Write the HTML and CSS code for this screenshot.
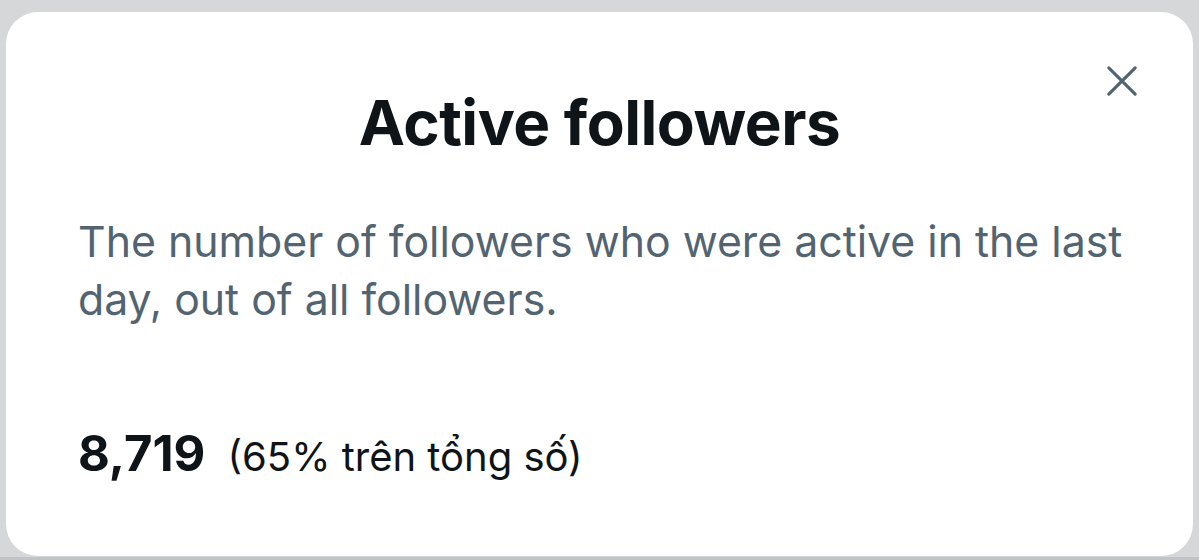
FILE: index.html
```html
<!DOCTYPE html>
<html lang="en">
<head>
<meta charset="utf-8">
<title>Active followers</title>
<link rel="stylesheet" href="styles.css">
</head>
<body>
<div class="backdrop">
  <div class="dialog">
    <button class="close" aria-label="Close">
      <svg viewBox="0 0 24 24" width="44" height="44"><path d="M4.8 4.8l14.4 14.4M19.2 4.8l-14.4 14.4" stroke="#536471" stroke-width="1.7" stroke-linecap="round" fill="none"/></svg>
    </button>
    <h1 class="title">Active followers</h1>
    <p class="desc">The number of followers who were active in the last day, out of all followers.</p>
    <div class="stat">
      <span class="value">8,719</span>
      <span class="share">(65% trên tổng số)</span>
    </div>
  </div>
</div>
</body>
</html>
```
FILE: styles.css
```css
html, body {
  margin: 0;
  padding: 0;
  width: 1199px;
  height: 560px;
  overflow: hidden;
  background: #d6d7d9;
}
.backdrop {
  height: 560px;
  box-sizing: border-box;
  padding: 12px 6px 4px 6px;
  background-color: #d6d7d9;
  box-shadow: inset 0 -3px 0 #c2c3c5;
}
.dialog {
  position: relative;
  height: 544px;
  background: #ffffff;
  border-radius: 32px;
  display: flex;
  flex-direction: column;
  padding: 0 36px 0 72px;
  box-sizing: border-box;
  font-family: Inter, "Noto Sans", sans-serif;
}
.close {
  position: absolute;
  top: 47px;
  right: 49px;
  width: 44px;
  height: 44px;
  padding: 0;
  border: 0;
  background: transparent;
  display: flex;
  align-items: center;
  justify-content: center;
}
.title {
  margin: 73px 36px 0 0;
  text-align: center;
  font-size: 62px;
  font-weight: 700;
  line-height: 76px;
  color: #0f1419;
  letter-spacing: -0.5px;
}
.desc {
  margin: 52px 0 0 0;
  font-size: 42.8px;
  line-height: 58px;
  color: #536471;
  font-weight: 400;
}
.stat {
  margin-top: 95px;
  display: flex;
  align-items: baseline;
  gap: 22px;
  color: #0f1419;
}
.value {
  font-size: 49px;
  font-weight: 700;
}
.share {
  font-size: 40px;
  font-weight: 400;
}
```
